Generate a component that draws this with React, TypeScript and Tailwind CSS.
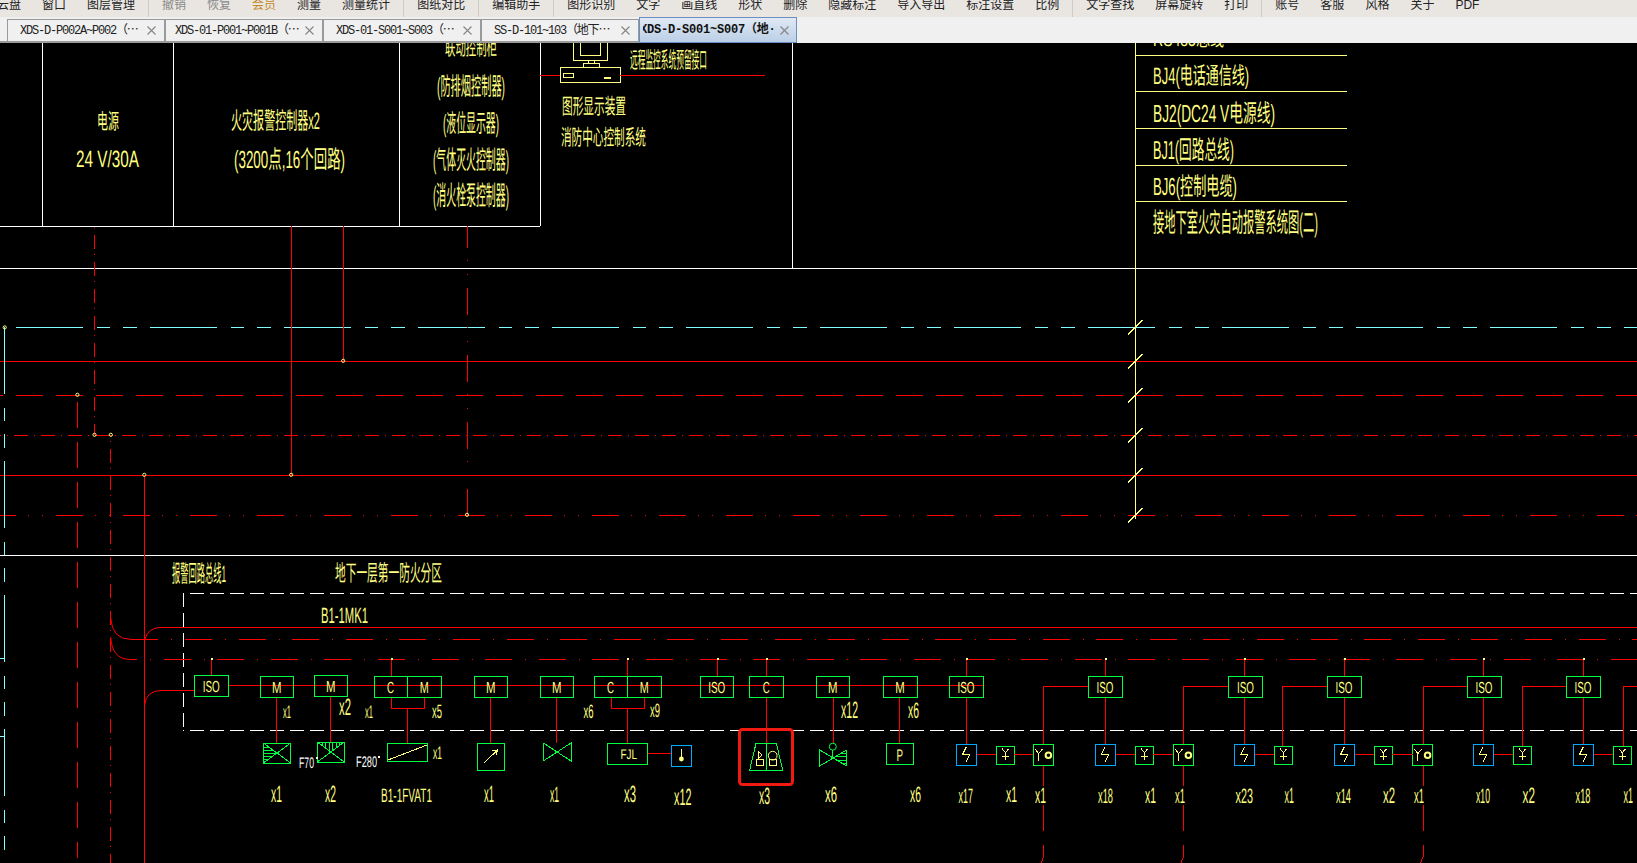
import React from "react";

const MENU: (string | null)[] = ["云盘","窗口","图层管理",null,"撤销","恢复","会员","测量","测量统计",null,"图纸对比",null,"编辑助手",null,"图形识别","文字","画直线","形状","删除","隐藏标注","导入导出","标注设置","比例",null,"文字查找","屏幕旋转","打印",null,"账号","客服","风格","关于","PDF"];
const TABS: [string, string][] = [
  ["XDS-D-P002A~P002（⋯", "pl-[12px]"],
  ["XDS-01-P001~P001B（⋯", "pl-[9px]"],
  ["XDS-01-S001~S003（⋯", "pl-[12px]"],
  ["SS-D-101~103（地下⋯", "pl-[12px]"],
];

const RED = "#ff0000", GREEN = "#00ff40", BLUE = "#00aaff", CYAN = "#80ffff", YEL = "#ffff80", WHITE = "#ffffff";
const FONT = '"Liberation Sans","Noto Sans CJK SC",sans-serif';
const MONO = '"Liberation Mono","Noto Sans CJK SC",monospace';

function Ln({ p, c = RED, w = 1 }: { p: number[]; c?: string; w?: number }) {
  return <line x1={p[0]} y1={p[1]} x2={p[2]} y2={p[3]} stroke={c} strokeWidth={w} />;
}
function Dash({ p, c = RED, dash, phase }: { p: number[]; c?: string; dash: number[]; phase: number }) {
  const period = dash.reduce((a, b) => a + b, 0);
  const start = p[0] === p[2] ? p[1] : p[0];
  const off = (((start - phase) % period) + period) % period;
  return <line x1={p[0]} y1={p[1]} x2={p[2]} y2={p[3]} stroke={c} strokeWidth={1} strokeDasharray={dash.join(" ")} strokeDashoffset={off} />;
}
function T({ t, a, b, top, bot, c = YEL, latin = false }: { t: string; a: number; b: number; top: number; bot: number; c?: string; latin?: boolean }) {
  const h = bot - top;
  const fs = latin ? h / 0.72 : h * 1.08;
  const y = latin ? bot : bot - 0.14 * h;
  return (
    <text x={a} y={y} fontSize={fs} fontFamily={FONT} fill={c} textLength={b - a} lengthAdjust="spacingAndGlyphs" textRendering="geometricPrecision">
      {t}
    </text>
  );
}
function Box({ a, b, y0, y1, c = GREEN }: { a: number; b: number; y0: number; y1: number; c?: string }) {
  return <rect x={a} y={y0} width={b - a} height={y1 - y0} fill="none" stroke={c} strokeWidth={1} />;
}
function LabelBox({ a, b, y0, y1, t }: { a: number; b: number; y0: number; y1: number; t: string }) {
  const w = t.length === 3 ? 17 : t === "M" ? 9.5 : 7;
  const mid = (a + b) / 2;
  return (
    <g>
      <Box a={a} b={b} y0={y0} y1={y1} />
      <T t={t} a={mid - w / 2} b={mid + w / 2} top={y0 + 5} bot={y1 - 4.5} latin />
    </g>
  );
}
function Split({ a, b, y0, y1, l, r }: { a: number; b: number; y0: number; y1: number; l: string; r: string }) {
  const m = (a + b) / 2;
  return (
    <g>
      <Box a={a} b={b} y0={y0} y1={y1} />
      <Ln p={[m, y0, m, y1]} c={GREEN} />
      <T t={l} a={a + 13} b={a + 20} top={y0 + 5} bot={y1 - 4.5} latin />
      <T t={r} a={m + 12} b={m + 21} top={y0 + 5} bot={y1 - 4.5} latin />
    </g>
  );
}
function Bolt({ a }: { a: number }) {
  return (
    <g>
      <Box a={a} b={a + 20.3} y0={744} y1={765} c={BLUE} />
      <polyline points={`${a + 9.7},747.3 ${a + 6},754.7 ${a + 13.3},754.7 ${a + 9.7},762`} fill="none" stroke={YEL} />
    </g>
  );
}
function YPlus({ a }: { a: number }) {
  return (
    <g>
      <Box a={a} b={a + 18} y0={746} y1={764} />
      <polyline points={`${a + 5.7},748.7 ${a + 9},752.7 ${a + 12.3},748.7`} fill="none" stroke={YEL} />
      <Ln p={[a + 9, 752.7, a + 9, 760.3]} c={YEL} />
      <Ln p={[a + 5.3, 756.7, a + 12.7, 756.7]} c={YEL} />
    </g>
  );
}
function YO({ a }: { a: number }) {
  return (
    <g>
      <Box a={a} b={a + 20} y0={744} y1={765} />
      <polyline points={`${a + 1.7},749 ${a + 5.3},753.7 ${a + 9},749`} fill="none" stroke={YEL} />
      <Ln p={[a + 5.3, 753.7, a + 5.3, 761.3]} c={YEL} />
      <circle cx={a + 15} cy={755.3} r={2.8} fill="none" stroke={YEL} strokeWidth={2} shapeRendering="auto" />
    </g>
  );
}
function Node({ x, y }: { x: number; y: number }) {
  return <circle cx={x} cy={y} r={1.6} fill="none" stroke={YEL} strokeWidth={1} shapeRendering="auto" />;
}
function CloseX() {
  return (
    <svg width={9} height={9} viewBox="0 0 9 9" className="shrink-0" shapeRendering="auto">
      <path d="M0.5 0.5 L8.5 8.5 M8.5 0.5 L0.5 8.5" stroke="#858585" strokeWidth={1.1} fill="none" />
    </svg>
  );
}

const CYAN_DASH = [67, 14, 13, 13, 14, 13];
const DD1 = [14, 5.5, 1, 6.5];
const DD2 = [27, 12, 1, 13, 1, 13];
const DD3 = [27, 13, 1, 12.6];

const STUBS = [211, 391, 627.5, 717.5, 766.4, 966.4, 1105, 1244.5, 1344, 1483.5, 1583];

const LABELS: [string, number, number, number, number][] = [
  ["x1",283,291,705,718],["x2",339,351,698,715],["x1",365,373,705,718],["x5",432,442,704,718],["x1",433,442,746,759],
  ["x1",271,282,785,802],["x2",325,336,785,802],["B1-1FVAT1",381,432,788,802],["x1",484,494,785,802],["x1",550,559,786,802],
  ["x6",583.6,593.6,704,718],["x9",650,660,703,717],["x12",841,858,701,718],["x6",908,919,702,718],
  ["x3",624,636,785,802],["x12",674,691.4,788,805],["x3",759,770,787,804],["x6",825,837,786,802],["x6",910,921,786,802],
  ["x17",958.6,973,788,803],["x1",1006,1017,786,802],["x1",1035,1046,787,803],
  ["x18",1098,1113,788,803],["x1",1145,1156,787,803],["x1",1175,1185,788,803],["x23",1235.6,1253,788,803],["x1",1284.6,1294,787,803],
  ["x14",1336,1351,788,803],["x2",1383,1395,787,803],["x1",1414,1424,788,803],["x10",1476,1490,788,803],["x2",1522.6,1535,787,803],
  ["x18",1575.6,1590.5,788,803],["x1",1623.5,1633,787,803],
];

function Canvas() {
  return (
    <svg viewBox="0 43 1637 820" width={1637} height={820} className="block" shapeRendering="crispEdges">
      {/* frames */}
      {[42.4, 173.6, 399.6, 540].map((x) => <Ln key={x} p={[x, 43, x, 226.4]} c={WHITE} />)}
      <Ln p={[792.4, 43, 792.4, 268]} c={WHITE} />
      <Ln p={[0, 226.4, 540, 226.4]} c={WHITE} />
      <Ln p={[0, 268.4, 1637, 268.4]} c={WHITE} />
      <Ln p={[0, 555.4, 1637, 555.4]} c={WHITE} />
      <Ln p={[1135.4, 43, 1135.4, 519]} c={YEL} />
      {[55.4, 91.4, 128.4, 165.4, 201.4].map((y) => <Ln key={y} p={[1135, y, 1347, y]} c={YEL} />)}

      {/* bus lines */}
      <Dash p={[16, 327.4, 1637, 327.4]} c={CYAN} dash={CYAN_DASH} phase={16} />
      <Ln p={[0, 361.4, 1637, 361.4]} />
      <Dash p={[0, 395.4, 1637, 395.4]} dash={[27, 13]} phase={16} />
      <Dash p={[0, 435.4, 1637, 435.4]} dash={DD1} phase={149} />
      <Ln p={[0, 475.4, 1637, 475.4]} />
      <Dash p={[0, 515.4, 1637, 515.4]} dash={DD2} phase={56} />

      {/* risers */}
      <Dash p={[94.4, 226, 94.4, 435]} dash={DD1} phase={234.8} />
      <Ln p={[291.4, 226, 291.4, 475]} />
      <Ln p={[343.4, 226, 343.4, 361]} />
      <Dash p={[467.4, 226, 467.4, 515]} dash={DD2} phase={355} />
      <Dash p={[77.4, 395, 77.4, 858]} dash={[26, 14]} phase={441.7} />
      <Dash p={[110.5, 435, 110.5, 863]} dash={DD1} phase={448.8} />
      <Ln p={[144.5, 475, 144.5, 863]} />
      <Dash p={[4.5, 327, 4.5, 863]} c={CYAN} dash={CYAN_DASH} phase={327} />
      <Ln p={[0, 658.5, 4.5, 658.5]} c={CYAN} />
      <Ln p={[0, 736.5, 4.5, 736.5]} c={CYAN} />

      {[327, 361, 395, 435, 475, 515].map((y) => <Ln key={y} p={[1128, y + 7.5, 1142.5, y - 7]} c={YEL} />)}
      {[[4.7,327.4],[77.4,394.8],[94.5,434.8],[110.8,434.8],[144.3,474.8],[291.2,474.8],[343.2,360.8],[467,514.8]].map(([x, y]) => <Node key={x} x={x} y={y} />)}

      {/* top texts */}
      <T t="电源" a={97} b={119} top={112} bot={132} />
      <T t="24 V/30A" a={76} b={139} top={150} bot={167} latin />
      <T t="火灾报警控制器x2" a={231} b={320} top={110} bot={132} />
      <T t="(3200点,16个回路)" a={234} b={345} top={148} bot={171} />
      <T t="联动控制柜" a={445} b={497} top={38} bot={58} />
      <T t="(防排烟控制器)" a={437} b={505} top={75} bot={98} />
      <T t="(液位显示器)" a={443} b={499} top={112} bot={135} />
      <T t="(气体灭火控制器)" a={433} b={509} top={148} bot={172} />
      <T t="(消火栓泵控制器)" a={433} b={509} top={183} bot={208} />
      <T t="远程监控系统预留接口" a={630} b={707} top={50} bot={71} />
      <T t="图形显示装置" a={562} b={626} top={97} bot={117} />
      <T t="消防中心控制系统" a={561} b={646} top={128} bot={148} />
      <T t="RS485总线" a={1153} b={1224} top={31} bot={49} />
      <T t="BJ4(电话通信线)" a={1153} b={1249} top={65} bot={87} />
      <T t="BJ2(DC24 V电源线)" a={1153} b={1275} top={102} bot={125} />
      <T t="BJ1(回路总线)" a={1153} b={1234} top={138} bot={162} />
      <T t="BJ6(控制电缆)" a={1153} b={1237} top={175} bot={198} />
      <T t="接地下室火灾自动报警系统图(二)" a={1153} b={1318} top={210} bot={235} />

      {/* computer */}
      <Box a={560} b={620} y0={67} y1={82} c={YEL} />
      <Box a={563} b={573} y0={73} y1={77} c={YEL} />
      <Ln p={[604, 78, 611, 78]} c={YEL} w={2} />
      <polyline points="573,43 573,60 607,60 607,43" fill="none" stroke={YEL} />
      <polyline points="580,43 580,55 600,55 600,43" fill="none" stroke={YEL} />
      <polyline points="583,67 583,63 599,63 599,67" fill="none" stroke={YEL} />
      <polyline points="588,60 588,63 594,63 594,60" fill="none" stroke={YEL} />
      <Ln p={[540, 75.4, 560, 75.4]} />
      <Ln p={[620, 75.4, 765, 75.4]} />

      {/* lower section */}
      <T t="报警回路总线1" a={172} b={226} top={563} bot={585} />
      <T t="地下一层第一防火分区" a={335} b={442} top={563} bot={584} />
      <T t="B1-1MK1" a={321} b={368} top={607} bot={623} latin />
      <Dash p={[183, 593.5, 1637, 593.5]} c={WHITE} dash={[14, 6]} phase={190} />
      <Dash p={[183, 730.4, 1637, 730.4]} c={WHITE} dash={[14, 6]} phase={190} />
      <Dash p={[183.5, 593, 183.5, 730]} c={WHITE} dash={[14, 6]} phase={593} />

      <g shapeRendering="auto" fill="none" stroke={RED}>
        <path d="M110.7 618 Q112 639.4 131 639.4" />
        <path d="M110.7 637 Q112 659.4 130 659.4" />
        <path d="M144.6 640 Q148 627.4 161 627.4" />
        <path d="M144.6 705 Q146 690.4 162 690.4" />
      </g>
      <Ln p={[160, 627.4, 1637, 627.4]} />
      <Dash p={[131, 639.4, 1637, 639.4]} dash={DD3} phase={185} />
      <Dash p={[130, 659.4, 1637, 659.4]} dash={DD3} phase={163.5} />
      <Ln p={[160, 690.4, 194, 690.4]} />

      {/* chain */}
      <Ln p={[228, 685.4, 983, 685.4]} />
      {[[1043.6,1088],[1183.4,1228],[1282.5,1327],[1423,1467],[1522.5,1566],[1623,1637]].map(([a, b]) => <Ln key={a} p={[a, 686.4, b, 686.4]} />)}

      {/* stubs */}
      {STUBS.map((x) => (
        <g key={x}>
          <Ln p={[x, 659, x, 676]} />
          <rect x={x - 0.5} y={658} width={2} height={2} fill={YEL} />
        </g>
      ))}

      {/* drops */}
      {[[276.8,697,743],[330.7,696,742],[407.5,708,743],[490.4,697,743],[556.5,697,743],[627.5,708,743],[766.4,697,743],[833,697,744],[899.3,697,743],[966.4,697,744],[1105,697,744],[1244.5,697,744],[1344,697,744],[1483.5,697,744],[1583,697,744],[1282.5,686,746],[1522.5,686,746],[1623,686,746]].map(([x, a, b]) => (
        <Ln key={x} p={[x, a, x, b]} />
      ))}
      {[[1043.6],[1183.4],[1423]].map(([x]) => (
        <g key={x}>
          <Ln p={[x, 686, x, 744]} />
          <Ln p={[x, 765, x, 786]} />
          <Ln p={[x, 805, x, 831]} />
          <Ln p={[x, 845, x, 857]} />
          <Ln p={[x, 857, x - 2.5, 863]} />
        </g>
      ))}
      <polyline points="391.4,697 391.4,708 424.6,708 424.6,697" fill="none" stroke={RED} />
      <polyline points="611.4,697 611.4,708 644.6,708 644.6,697" fill="none" stroke={RED} />

      {/* upper boxes */}
      <LabelBox a={194} b={228.6} y0={675} y1={696} t="ISO" />
      <LabelBox a={260} b={293.6} y0={676} y1={697} t="M" />
      <LabelBox a={314} b={347.5} y0={675} y1={696} t="M" />
      <Split a={374} b={441.6} y0={676} y1={697} l="C" r="M" />
      <LabelBox a={474} b={507.5} y0={676} y1={697} t="M" />
      <LabelBox a={540} b={573.6} y0={676} y1={697} t="M" />
      <Split a={594} b={661.6} y0={676} y1={697} l="C" r="M" />
      <LabelBox a={700} b={733.6} y0={676} y1={697} t="ISO" />
      <LabelBox a={749} b={783.6} y0={676} y1={697} t="C" />
      <LabelBox a={816} b={849.6} y0={676} y1={697} t="M" />
      <LabelBox a={883} b={917} y0={676} y1={697} t="M" />
      {[949, 1088, 1228.5, 1327, 1467, 1566].map((a) => <LabelBox key={a} a={a} b={a + 34} y0={676} y1={697} t="ISO" />)}

      {/* dampers */}
      <Box a={263.3} b={290.7} y0={743} y1={763} />
      <Ln p={[263.3, 743, 290.7, 763]} c={GREEN} />
      <Ln p={[263.3, 763, 290.7, 743]} c={GREEN} />
      {[747, 750, 753, 756, 759].map((y) => <Ln key={y} p={[263.3, y, 263.3 + 13.7 - Math.abs(y - 753) * 1.37, y]} c={GREEN} />)}
      <Box a={317.3} b={344.3} y0={742} y1={762} />
      <Ln p={[317.3, 742, 344.3, 762]} c={GREEN} />
      <Ln p={[317.3, 762, 344.3, 742]} c={GREEN} />
      {[322, 325.5, 329, 332.5, 336, 339.5].map((x) => <Ln key={x} p={[x, 742, x, 752 - Math.abs(x - 330.8) * 0.74]} c={GREEN} />)}
      <T t="F70" a={299} b={314} top={757} bot={768} c={WHITE} latin />
      <rect x={316} y={757} width={2} height={2} fill={WHITE} />
      <T t="F280" a={356} b={377} top={756} bot={767} c={WHITE} latin />
      <rect x={378} y={756} width={2} height={2} fill={WHITE} />

      {/* FVAT */}
      <Box a={387.5} b={427.5} y0={743} y1={761} />
      <Ln p={[388, 760, 427, 745]} c={YEL} />
      {/* arrow */}
      <Box a={477.5} b={504.6} y0={743} y1={770} />
      <Ln p={[484, 763, 497.5, 750]} c={YEL} />
      <polyline points="492,751 497.5,750 496.5,755" fill="none" stroke={YEL} />
      {/* bowtie */}
      <polygon points="543.3,743 543.3,761 571,743 571,761" fill="none" stroke={GREEN} />
      {/* FJL */}
      <Box a={607.5} b={647.5} y0={743} y1={764} />
      <T t="FJL" a={620.5} b={637} top={749} bot={759} latin />
      <Ln p={[647.5, 753.4, 671.4, 753.4]} />
      <Box a={671.4} b={691.8} y0={745} y1={766} c={BLUE} />
      <Ln p={[681.4, 749, 681.4, 757]} c={YEL} />
      <circle cx={681.4} cy={759} r={2.4} fill={YEL} shapeRendering="auto" />

      {/* highlighted symbol */}
      <polygon points="756,743.3 776.3,743.3 782.7,770 749.7,770" fill="none" stroke={GREEN} />
      <Ln p={[766.4, 743.3, 766.4, 770]} c={GREEN} />
      <Box a={756.3} b={763} y0={759} y1={765.7} c={YEL} />
      <polyline points="758.3,750.7 758.3,759" fill="none" stroke={YEL} />
      <polyline points="758.3,751 762,755 758.3,759" fill="none" stroke={YEL} />
      <circle cx={772.7} cy={755.7} r={4.4} fill="none" stroke={YEL} shapeRendering="auto" />
      <Box a={769.7} b={776.3} y0={759.5} y1={765.7} c={YEL} />
      <rect x={739.5} y={729.5} width={53} height={55} rx={3} fill="none" stroke="#f01a10" strokeWidth={3} shapeRendering="auto" />

      {/* valve */}
      <polygon points="819.7,750 819.7,766 846.7,750 846.7,766" fill="none" stroke={GREEN} />
      <circle cx={832.8} cy={746.7} r={3.5} fill="none" stroke={GREEN} shapeRendering="auto" />
      <Ln p={[832.8, 750, 832.8, 758]} c={GREEN} />
      {[[841.3,753.3],[835.8,756.7],[836.9,760],[842,763.3]].map(([x, y]) => <Ln key={y} p={[x, y, 846.7, y]} c={GREEN} />)}

      {/* P */}
      <Box a={886.4} b={913.6} y0={743} y1={764} />
      <T t="P" a={896.5} b={903} top={749} bot={761} latin />

      {/* alarm groups */}
      <Bolt a={956.4} /><Bolt a={1095.3} /><Bolt a={1234.5} /><Bolt a={1334.4} /><Bolt a={1473.3} /><Bolt a={1573.4} />
      <YPlus a={996.4} /><YPlus a={1135.4} /><YPlus a={1274.4} /><YPlus a={1374.3} /><YPlus a={1513.4} /><YPlus a={1613.3} />
      <YO a={1033.4} /><YO a={1173.4} /><YO a={1412.6} />
      {[[977,996.4],[1014.4,1033.4],[1115.6,1135.4],[1153.4,1173.4],[1254.8,1274.4],[1354.7,1374.3],[1392.3,1412.6],[1493.6,1513.4],[1593.7,1613.3]].map(([a, b]) => (
        <Ln key={a} p={[a, 754.5, b, 754.5]} />
      ))}

      {LABELS.map(([t, a, b, top, bot], i) => <T key={i} t={t} a={a} b={b} top={top} bot={bot} latin />)}
    </svg>
  );
}

export default function App() {
  return (
    <div className="w-[1637px] h-[863px] overflow-hidden bg-black flex flex-col" style={{ fontFamily: FONT }}>
      <div className="h-[17px] shrink-0 bg-[#e9e6e2] overflow-hidden">
        <div className="flex items-start -mt-[3px] -ml-[13.5px] text-[12px] leading-[16px] whitespace-nowrap text-[#222]">
          {MENU.map((m, i) =>
            m === null ? (
              <div key={i} className="w-px h-[20px] bg-[#cfccc8] mx-[2.5px]" />
            ) : (
              <div key={i} className={`px-[10.5px] ${m === "撤销" || m === "恢复" ? "text-[#8a8a8a]" : m === "会员" ? "text-[#c48a28]" : ""}`}>
                {m}
              </div>
            )
          )}
        </div>
      </div>
      <div className="h-[26px] shrink-0 bg-[#f0f0f0] flex items-end">
        <div className="w-[7px] h-[2px] bg-[#9a9a9a]" />
        {TABS.map(([t, pad]) => (
          <div key={t} className={`w-[158px] h-[24px] bg-[#f0f0f0] border border-b-2 border-[#9a9a9a] flex items-center gap-[2px] ${pad} pr-[8px] overflow-hidden`}>
            <span className="flex-1 overflow-hidden whitespace-nowrap text-[12px] tracking-[-1.2px] text-[#222]" style={{ fontFamily: MONO }}>
              {t}
            </span>
            <CloseX />
          </div>
        ))}
        <div className="w-[158px] h-[26px] bg-gradient-to-b from-[#e0e9f4] to-[#bbcfe6] border border-[#6a8fc0] flex items-center gap-[3px] pl-[3px] pr-[7px] overflow-hidden">
          <span className="flex-1 overflow-hidden whitespace-nowrap font-bold text-[12px] tracking-[-0.2px] text-[#111]" style={{ fontFamily: MONO }}>
            <span className="-ml-[3px] inline-block">XDS-D-S001~S007（地·</span>
          </span>
          <CloseX />
        </div>
      </div>
      <Canvas />
    </div>
  );
}
